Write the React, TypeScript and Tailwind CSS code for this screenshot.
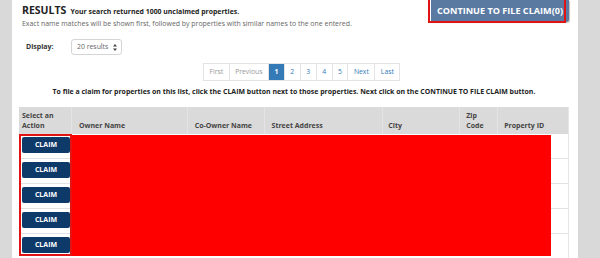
import { useState } from 'react'

const columns = [
  { key: 'action', label: ['Select an', 'Action'], width: 'w-[52px]', pad: 'px-[3px]' },
  { key: 'owner', label: ['Owner Name'], width: 'w-[116px]', pad: 'px-[7px]' },
  { key: 'coowner', label: ['Co-Owner Name'], width: 'w-[77px]', pad: 'px-[7px]' },
  { key: 'street', label: ['Street Address'], width: 'w-[119px]', pad: 'px-[7px]' },
  { key: 'city', label: ['City'], width: 'w-[77px]', pad: 'px-[5px]' },
  { key: 'zip', label: ['Zip', 'Code'], width: 'w-[38px]', pad: 'px-[6px]' },
  { key: 'pid', label: ['Property ID'], width: 'w-[71px]', pad: 'px-[6px]' },
]

const pages = ['First', 'Previous', '1', '2', '3', '4', '5', 'Next', 'Last']

export default function App() {
  const [current] = useState('1')
  const [claimed] = useState(0)
  const rows = [0, 1, 2, 3, 4]

  return (
    <div className="flex h-[258px] w-[600px] overflow-hidden bg-[#d9d9d9] font-['Open_Sans',sans-serif] text-[#333]">
      <div className="w-[12px] shrink-0" />
      <div className="relative w-[566px] shrink-0 bg-white pl-[7px] pr-[9px]">
        {/* header */}
        <div className="flex h-[25px] items-start justify-between">
          <div className="pl-[3px] pt-[1px]">
            <p className="whitespace-nowrap leading-[14px]">
              <span className="text-[10.5px] font-bold text-[#222]">RESULTS</span>{' '}
              <span className="text-[6.9px] font-bold text-[#222]">Your search returned 1000 unclaimed properties.</span>
            </p>
            <p className="whitespace-nowrap text-[6.95px] leading-[10px] text-[#666]">
              Exact name matches will be shown first, followed by properties with similar names to the one entered.
            </p>
          </div>
          <div className="relative">
            <button className="flex h-[22px] w-[138px] items-center justify-center rounded-br-[3px] bg-[#5a7aa1] text-[9.1px] font-bold text-white shadow-[1px_1px_1px_rgba(0,0,0,0.25)]">
              CONTINUE TO FILE CLAIM({claimed})
            </button>
            <div className="pointer-events-none absolute left-[-3px] top-[-2px] h-[25px] w-[138px] border-2 border-[#e01414]" />
          </div>
        </div>

        {/* display */}
        <div className="mt-[14px] flex h-[16px] items-center">
          <span className="ml-[7px] w-[45px] text-[7px] font-bold text-[#333]">Display:</span>
          <div className="flex h-[16px] w-[51px] items-center gap-[5px] rounded-[3px] border border-[#d5d5d5] pl-[5px] text-[6.9px] text-[#666]">
            <span>20 results</span>
            <svg width="4" height="7" viewBox="0 0 4 7" className="text-[#444]">
              <path d="M2 0 L4 2.6 H0 Z M2 7 L4 4.4 H0 Z" fill="currentColor" />
            </svg>
          </div>
        </div>

        {/* pagination */}
        <div className="ml-[184px] mt-[8px] flex h-[18px] w-max border border-[#e3e3e3]">
          {pages.map((p, i) => {
            const disabled = p === 'First' || p === 'Previous'
            const active = p === current
            return (
              <span
                key={p}
                className={`flex items-center px-[5.5px] text-[6.8px] ${i > 0 ? 'border-l border-[#e3e3e3]' : ''} ${
                  active ? 'bg-[#337ab7] font-bold text-white' : disabled ? 'text-[#999]' : 'text-[#337ab7]'
                }`}
              >
                {p}
              </span>
            )
          })}
        </div>

        <p className="mt-[6px] whitespace-nowrap text-center text-[6.95px] font-bold leading-[10px] text-[#222]">
          To file a claim for properties on this list, click the CLAIM button next to those properties. Next click on the CONTINUE TO FILE CLAIM button.
        </p>

        {/* table */}
        <div className="relative mt-[10px] w-[550px] border-r border-[#e6e6e6]">
          <div className="flex h-[27px] bg-[#dadada]">
            {columns.map((c, i) => (
              <div
                key={c.key}
                className={`${c.width} ${c.pad} flex flex-col justify-end pb-[3px] text-[7px] font-bold leading-[10px] text-[#444] ${
                  i > 0 ? 'border-l border-[#e4e4e4]' : ''
                }`}
              >
                {c.label.map((l) => (
                  <span key={l} className="whitespace-nowrap">{l}</span>
                ))}
              </div>
            ))}
          </div>
          {rows.map((r) => (
            <div key={r} className="flex h-[25px] border-b border-[#e2e2e2]">
              <div className="w-[52px] pl-[3px] pt-[3px]">
                <button className="flex h-[16px] w-[48px] items-center justify-center rounded-[2px] bg-[#0e3a6a] text-[7px] font-bold text-white">
                  CLAIM
                </button>
              </div>
              <div className="flex-1" />
            </div>
          ))}

          {/* redaction overlays */}
          <div className="pointer-events-none absolute left-0 top-[27px] h-[122px] w-[53px] border-2 border-[#e01414]" />
          <div className="pointer-events-none absolute left-[53px] top-[28px] h-[121px] w-[479px] bg-[#ff0000]" />
        </div>
      </div>
      <div className="flex-1" />
    </div>
  )
}
